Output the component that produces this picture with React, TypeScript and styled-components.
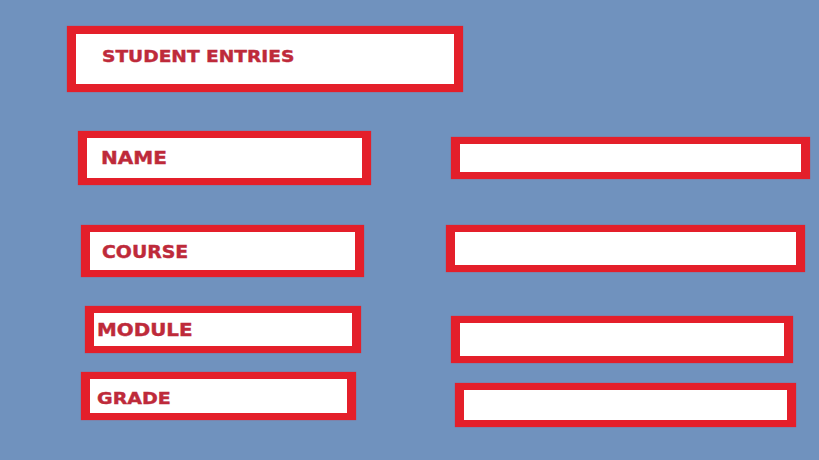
import React from "react";
import styled, { createGlobalStyle } from "styled-components";

const GlobalStyle = createGlobalStyle`
  html, body {
    margin: 0;
    padding: 0;
    background: #7092be;
  }
  body {
    font-family: "DejaVu Sans", "Liberation Sans", sans-serif;
  }
`;

const RED = "#e41f2a";
const TEXT = "#be2a3a";

const Page = styled.main`
  width: 819px;
  height: 460px;
  box-sizing: border-box;
  padding-top: 26px;
  background: #7092be;
  display: flex;
  flex-direction: column;
  overflow: hidden;
`;

const Header = styled.div`
  box-sizing: border-box;
  margin-left: 67px;
  width: 396px;
  height: 66px;
  border-style: solid;
  border-color: ${RED};
  border-width: 8px 9px;
  background: #fff;
  display: flex;
  align-items: center;
  padding: 0 0 3px 26px;
  box-shadow: 0 0 1px 0 rgba(228, 31, 42, 0.7);
`;

const Text = styled.span<{ $size: number; $stretch: number }>`
  display: inline-block;
  font-weight: bold;
  font-size: ${(p) => p.$size}px;
  line-height: 1;
  color: ${TEXT};
  -webkit-text-stroke: 0.4px ${TEXT};
  white-space: nowrap;
  transform: scaleX(${(p) => p.$stretch});
  transform-origin: left center;
`;

const Row = styled.div<{ $top: number }>`
  display: flex;
  align-items: flex-start;
  margin-top: ${(p) => p.$top}px;
`;

const LabelBox = styled.div<{ $left: number; $w: number; $h: number; $pad: number; $drop: number }>`
  box-sizing: border-box;
  margin-left: ${(p) => p.$left}px;
  width: ${(p) => p.$w}px;
  height: ${(p) => p.$h}px;
  border-style: solid;
  border-color: ${RED};
  border-width: 7px 9px;
  background: #fff;
  display: flex;
  align-items: center;
  padding-left: ${(p) => p.$pad}px;
  padding-top: ${(p) => p.$drop}px;
  box-shadow: 0 0 1px 0 rgba(228, 31, 42, 0.7);
`;

const Field = styled.input<{ $left: number; $w: number; $h: number; $top: number }>`
  box-sizing: border-box;
  margin: ${(p) => p.$top}px 0 0 ${(p) => p.$left}px;
  width: ${(p) => p.$w}px;
  height: ${(p) => p.$h}px;
  border-style: solid;
  border-color: ${RED};
  border-width: 7px 9px;
  border-radius: 0;
  background: #fff;
  padding: 0;
  outline: none;
  font: inherit;
  box-shadow: 0 0 1px 0 rgba(228, 31, 42, 0.7);
`;

type Entry = {
  label: string;
  rowTop: number;
  lx: number;
  lw: number;
  lh: number;
  pad: number;
  drop: number;
  size: number;
  stretch: number;
  fx: number;
  fw: number;
  fh: number;
  ft: number;
};

const entries: Entry[] = [
  { label: "NAME", rowTop: 39, lx: 78, lw: 293, lh: 54, pad: 14, drop: 0, size: 17, stretch: 1.18, fx: 80, fw: 359, fh: 42, ft: 6 },
  { label: "COURSE", rowTop: 40, lx: 81, lw: 283, lh: 52, pad: 12, drop: 2, size: 17, stretch: 1.11, fx: 82, fw: 359, fh: 47, ft: 0 },
  { label: "MODULE", rowTop: 29, lx: 85, lw: 276, lh: 47, pad: 3, drop: 2, size: 17, stretch: 1.17, fx: 90, fw: 342, fh: 47, ft: 10 },
  { label: "GRADE", rowTop: 9, lx: 81, lw: 275, lh: 48, pad: 7, drop: 5, size: 16, stretch: 1.19, fx: 99, fw: 341, fh: 44, ft: 11 },
];

export default function App() {
  return (
    <>
      <GlobalStyle />
      <Page>
        <Header>
          <Text $size={15.5} $stretch={1.2}>STUDENT ENTRIES</Text>
        </Header>
        {entries.map((e) => (
          <Row key={e.label} $top={e.rowTop}>
            <LabelBox $left={e.lx} $w={e.lw} $h={e.lh} $pad={e.pad} $drop={e.drop}>
              <Text $size={e.size} $stretch={e.stretch}>{e.label}</Text>
            </LabelBox>
            <Field
              aria-label={e.label}
              $left={e.fx}
              $w={e.fw}
              $h={e.fh}
              $top={e.ft}
            />
          </Row>
        ))}
      </Page>
    </>
  );
}
